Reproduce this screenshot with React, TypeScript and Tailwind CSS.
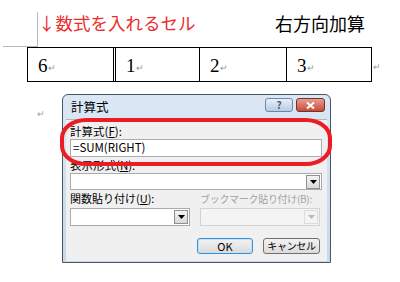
const jp = { fontFamily: '"Noto Sans CJK JP", "Noto Sans", sans-serif' };
const serif = { fontFamily: '"Liberation Serif", "DejaVu Serif", serif' };

const Mark = ({ className = '' }: { className?: string }) => (
  <span className={`text-[9px] leading-none text-[#9a9a9a] ${className}`} style={jp}>
    ↵
  </span>
);

const DropButton = ({ disabled = false }: { disabled?: boolean }) => (
  <div
    className={`ml-auto mr-[1px] flex h-[14px] w-[14px] items-center justify-center border ${
      disabled ? 'border-[#dcdcdc] bg-[#f4f4f4]' : 'border-[#8e8f8f] bg-gradient-to-b from-[#f4f4f4] to-[#d9d9d9]'
    }`}
  >
    <svg width="7" height="4" viewBox="0 0 7 4">
      <path d="M0 0h7L3.5 4z" fill={disabled ? '#b8b8b8' : '#000'} />
    </svg>
  </div>
);

const Select = ({ className = '', disabled = false }: { className?: string; disabled?: boolean }) => (
  <div
    className={`flex items-center border ${
      disabled ? 'border-[#d2d2d2] bg-[#f4f4f4]' : 'border-[#a9abb0] bg-white'
    } ${className}`}
  >
    <DropButton disabled={disabled} />
  </div>
);

const Cell = ({ value, className }: { value: string; className: string }) => (
  <div className={`flex items-center pl-[10px] pt-[1px] ${className}`}>
    <span className="text-[19px] leading-none text-black" style={serif}>
      {value}
    </span>
    <Mark className="mt-[4px]" />
  </div>
);

export default function App() {
  return (
    <div className="relative h-[282px] w-[400px] overflow-hidden bg-white">
      {/* heading row */}
      <div className="flex h-[47px] items-start">
        <div className="ml-[3px] mt-[12px] h-[35px] w-[35px] border-b border-r border-[#b9b9b9]" />
        <div className="mt-[14px] text-[17.5px] leading-none text-[#ee2b2b]" style={jp}>
          ↓数式を入れるセル
        </div>
        <div className="ml-auto mr-[35px] mt-[14px] text-[18px] leading-none text-black" style={jp}>
          右方向加算
        </div>
      </div>

      {/* table */}
      <div className="flex items-center">
        <div className="ml-[27px] flex h-[35px] border-b border-l border-t border-black">
          <Cell value="6" className="w-[88px] border-r-[3px] border-double border-black" />
          <Cell value="1" className="w-[84px] border-r border-black" />
          <Cell value="2" className="w-[87px] border-r border-black" />
          <Cell value="3" className="w-[85px] border-r border-black" />
        </div>
        <Mark className="ml-[1px] mt-[4px]" />
      </div>

      {/* dialog row */}
      <div className="mt-[12px] flex">
        <div className="w-[62px] pl-[37px] pt-[5px]">
          <Mark />
        </div>
        <div className="relative">
          <div className="flex h-[169px] w-[269px] flex-col rounded-t-[6px] border border-[#4a5663] bg-gradient-to-b from-[#dbe7f4] to-[#c6d8ec] px-[3px] pb-[1px]">
            {/* title bar */}
            <div className="flex h-[24px] shrink-0 items-center">
              <span className="ml-[5px] mt-[1px] text-[12.5px] leading-none text-black" style={jp}>
                計算式
              </span>
              <div className="ml-auto mr-[2px] mt-[-4px] flex gap-[3px]">
                <div className="flex h-[14px] w-[28px] items-center justify-center rounded-[3px] border border-[#6c87a6] bg-gradient-to-b from-[#e9f0f8] to-[#b7cbe2]">
                  <span className="text-[10px] font-bold leading-none text-[#4d5b6b]" style={jp}>
                    ?
                  </span>
                </div>
                <div className="flex h-[14px] w-[29px] items-center justify-center rounded-[3px] border border-[#7a3025] bg-gradient-to-b from-[#e4a08f] to-[#c24a36]">
                  <svg width="9" height="7" viewBox="0 0 9 7">
                    <path d="M1 0.5l7 6M8 0.5l-7 6" stroke="#fff" strokeWidth="2" />
                  </svg>
                </div>
              </div>
            </div>

            {/* body */}
            <div className="flex flex-1 flex-col whitespace-nowrap border-t border-[#a8b8c9] bg-[#f0f0f0] pl-[4px] pr-[5px] text-[11.5px] text-black" style={jp}>
              <div className="mt-[3px] h-[16px] leading-[16px]">
                計算式(<span className="underline">F</span>):
              </div>
              <div className="flex h-[18px] items-center border border-[#abadb3] bg-white pl-[2px] text-[11.5px] leading-none">
                =SUM(RIGHT)
              </div>
              <div className="h-[16px] leading-[16px]">
                表示形式(<span className="underline">N</span>):
              </div>
              <Select className="h-[17px]" />
              <div className="flex h-[17px] items-center text-[11px] leading-none">
                <span className="w-[130px]">
                  関数貼り付け(<span className="underline">U</span>):
                </span>
                <span className="text-[10px] tracking-[-0.3px] text-[#a3a3a3]">ブックマーク貼り付け(B):</span>
              </div>
              <div className="mt-[1px] flex gap-[10px]">
                <Select className="h-[18px] w-[120px]" />
                <Select className="h-[18px] w-[120px]" disabled />
              </div>
              <div className="mt-[12px] flex gap-[10px] pl-[127px] text-[11px]">
                <div className="flex h-[16px] w-[56px] items-center justify-center rounded-[3px] border border-[#3c8fd4] bg-gradient-to-b from-[#f2f2f2] to-[#dcdcdc] leading-none shadow-[inset_0_0_0_1px_#bfe3f7]">
                  OK
                </div>
                <div className="flex h-[16px] w-[57px] items-center justify-center rounded-[3px] border border-[#707070] bg-gradient-to-b from-[#f2f2f2] to-[#dcdcdc] text-[10px] leading-none tracking-[-0.3px]">
                  キャンセル
                </div>
              </div>
            </div>
          </div>

          {/* hand-drawn red highlight */}
          <div className="absolute left-[-2px] top-[24px] h-[48px] w-[272px] rounded-[26px/20px] border-[4px] border-[#ec1c24]" />
        </div>
      </div>
    </div>
  );
}
